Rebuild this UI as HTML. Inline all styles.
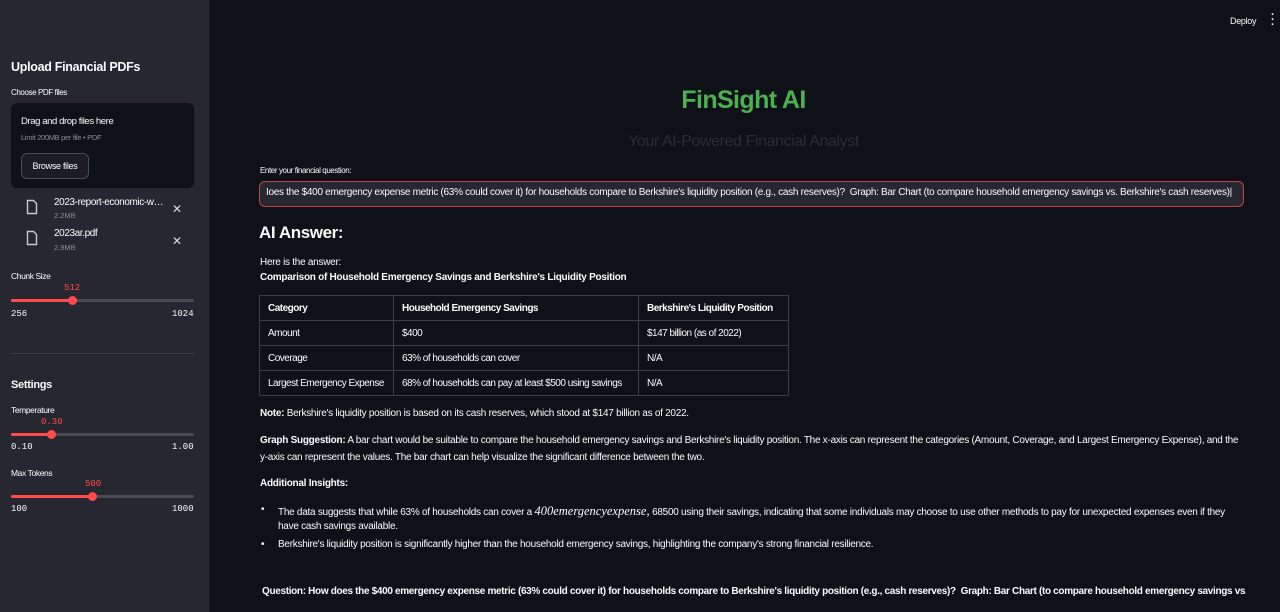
<!DOCTYPE html>
<html><head><meta charset="utf-8"><style>
*{box-sizing:border-box;margin:0;padding:0}
body{width:1280px;height:612px;overflow:hidden;background:#0e1117;font-family:"Liberation Sans",sans-serif;color:#fafafa;position:relative}
.sb{position:absolute;left:0;top:0;width:209px;height:612px;background:#262730}
.a{position:absolute;white-space:nowrap}
.t{font-size:9px;letter-spacing:-0.4px;color:#fafafa}
.m{font-family:"Liberation Mono",monospace;font-size:9px}
.track{position:absolute;left:11px;width:183px;height:3px;background:#4a4c55;border-radius:2px}
.fill{position:absolute;left:0;top:0;height:3px;background:#ff4b4b;border-radius:2px}
.knob{position:absolute;top:-3px;width:9px;height:9px;border-radius:50%;background:#ff4b4b;margin-left:-4px}
.body{font-size:10px;letter-spacing:-0.27px;color:#fafafa}
table{border-collapse:collapse;position:absolute;left:259px;top:295px;font-size:10px;letter-spacing:-0.5px}
td,th{border:1px solid #3b3e48;height:25px;padding:0 8px;text-align:left;white-space:nowrap}
th{font-weight:bold}
</style></head><body>
<div class="sb">
<div class="a" style="left:11px;top:60px;font-size:12.5px;font-weight:bold;letter-spacing:-0.3px">Upload Financial PDFs</div>
<div class="a t" style="left:11px;top:88px;font-size:8px">Choose PDF files</div>
<div style="position:absolute;left:11px;top:103px;width:183px;height:85px;background:#0e1117;border-radius:6px"></div>
<div class="a" style="left:21px;top:116px;font-size:9.5px;letter-spacing:-0.4px">Drag and drop files here</div>
<div class="a" style="left:21px;top:133px;font-size:7.5px;color:#8a8d96;letter-spacing:-0.3px">Limit 200MB per file • PDF</div>
<div style="position:absolute;left:21px;top:153px;width:68px;height:26px;border:1px solid #4a4c55;border-radius:6px;background:#1c1d24;font-size:9px;letter-spacing:-0.3px;text-align:center;line-height:24px">Browse files</div>
<svg class="a" style="left:26px;top:199px" width="12" height="16" viewBox="0 0 12 16"><path d="M1.5 1.5h6l3 3v10h-9z" fill="none" stroke="#c8c9cd" stroke-width="1.4"/></svg>
<div class="a" style="left:54px;top:197px;font-size:10px;letter-spacing:-0.4px">2023-report-economic-w…</div>
<div class="a" style="left:54px;top:211px;font-size:7.5px;color:#8a8d96">2.2MB</div>
<div class="a" style="left:172px;top:202px;font-size:12px;color:#ddd">✕</div>
<svg class="a" style="left:26px;top:230px" width="12" height="16" viewBox="0 0 12 16"><path d="M1.5 1.5h6l3 3v10h-9z" fill="none" stroke="#c8c9cd" stroke-width="1.4"/></svg>
<div class="a" style="left:54px;top:228px;font-size:10px;letter-spacing:-0.4px">2023ar.pdf</div>
<div class="a" style="left:54px;top:243px;font-size:7.5px;color:#8a8d96">2.9MB</div>
<div class="a" style="left:172px;top:234px;font-size:12px;color:#ddd">✕</div>
<div class="a t" style="left:11px;top:271px;font-size:8.5px">Chunk Size</div>
<div class="a m" style="left:64px;top:283px;color:#ff4b4b">512</div>
<div class="track" style="top:299px"><div class="fill" style="width:61px"></div><div class="knob" style="left:61px"></div></div>
<div class="a m" style="left:11px;top:309px">256</div>
<div class="a m" style="left:172px;top:309px">1024</div>
<div style="position:absolute;left:11px;top:353px;width:183px;height:1px;background:#3d3f48"></div>
<div class="a" style="left:11px;top:379px;font-size:11px;font-weight:bold;letter-spacing:-0.3px">Settings</div>
<div class="a t" style="left:11px;top:405px;font-size:8.5px">Temperature</div>
<div class="a m" style="left:41px;top:417px;color:#ff4b4b">0.30</div>
<div class="track" style="top:433px"><div class="fill" style="width:40px"></div><div class="knob" style="left:40px"></div></div>
<div class="a m" style="left:11px;top:442px">0.10</div>
<div class="a m" style="left:172px;top:442px">1.00</div>
<div class="a t" style="left:11px;top:468px;font-size:8.5px">Max Tokens</div>
<div class="a m" style="left:85px;top:479px;color:#ff4b4b">500</div>
<div class="track" style="top:495px"><div class="fill" style="width:81px"></div><div class="knob" style="left:81px"></div></div>
<div class="a m" style="left:11px;top:504px">100</div>
<div class="a m" style="left:172px;top:504px">1000</div>
</div>

<div class="a" style="left:1230px;top:16px;font-size:9px;letter-spacing:-0.3px">Deploy</div>
<div class="a" style="left:1271px;top:13px;font-size:11px;font-weight:bold;line-height:5px">·<br>·<br>·</div>

<div class="a" style="left:0;width:1487px;text-align:center;top:86px;font-size:25px;font-weight:bold;color:#4caf50;letter-spacing:-0.6px">FinSight AI</div>
<div class="a" style="left:0;width:1487px;text-align:center;top:133px;font-size:16px;color:#2a2d34;letter-spacing:-0.4px">Your AI-Powered Financial Analyst</div>

<div class="a t" style="left:260px;top:166px;font-size:8px">Enter your financial question:</div>
<div style="position:absolute;left:259px;top:181px;width:985px;height:26px;border:1px solid #c1444a;border-radius:6px;background:#262730;overflow:hidden"></div>
<div class="a" style="left:266px;top:187px;font-size:10px;letter-spacing:-0.3px;width:972px;overflow:hidden">Ioes the $400 emergency expense metric (63% could cover it) for households compare to Berkshire's liquidity position (e.g., cash reserves)?&nbsp; Graph: Bar Chart (to compare household emergency savings vs. Berkshire's cash reserves)|</div>

<div class="a" style="left:259px;top:223px;font-size:17px;font-weight:bold;letter-spacing:-0.4px">AI Answer:</div>
<div class="a body" style="left:260px;top:257px">Here is the answer:</div>
<div class="a body" style="left:260px;top:272px;font-weight:bold">Comparison of Household Emergency Savings and Berkshire's Liquidity Position</div>

<table>
<tr><th style="width:134px">Category</th><th style="width:245px">Household Emergency Savings</th><th style="width:150px">Berkshire's Liquidity Position</th></tr>
<tr><td>Amount</td><td>$400</td><td>$147 billion (as of 2022)</td></tr>
<tr><td>Coverage</td><td>63% of households can cover</td><td>N/A</td></tr>
<tr><td>Largest Emergency Expense</td><td>68% of households can pay at least $500 using savings</td><td>N/A</td></tr>
</table>

<div class="a body" style="left:260px;top:408px"><b>Note:</b> Berkshire's liquidity position is based on its cash reserves, which stood at $147 billion as of 2022.</div>
<div class="a body" style="left:260px;top:435px"><b>Graph Suggestion:</b> A bar chart would be suitable to compare the household emergency savings and Berkshire's liquidity position. The x-axis can represent the categories (Amount, Coverage, and Largest Emergency Expense), and the</div>
<div class="a body" style="left:260px;top:452px">y-axis can represent the values. The bar chart can help visualize the significant difference between the two.</div>
<div class="a body" style="left:260px;top:478px;font-weight:bold">Additional Insights:</div>
<div class="a body" style="left:261px;top:504px">•</div>
<div class="a body" style="left:278px;top:504px">The data suggests that while 63% of households can cover a <span style="font-family:'Liberation Serif',serif;font-style:italic;font-size:12.5px;letter-spacing:0">400emergencyexpense,</span> 68500 using their savings, indicating that some individuals may choose to use other methods to pay for unexpected expenses even if they</div>
<div class="a body" style="left:278px;top:521px">have cash savings available.</div>
<div class="a body" style="left:261px;top:539px">•</div>
<div class="a body" style="left:278px;top:539px">Berkshire's liquidity position is significantly higher than the household emergency savings, highlighting the company's strong financial resilience.</div>
<div class="a body" style="left:262px;top:586px;font-weight:bold;letter-spacing:-0.33px;width:984px;overflow:hidden">Question: How does the $400 emergency expense metric (63% could cover it) for households compare to Berkshire's liquidity position (e.g., cash reserves)?&nbsp; Graph: Bar Chart (to compare household emergency savings vs. I</div>
</body></html>
